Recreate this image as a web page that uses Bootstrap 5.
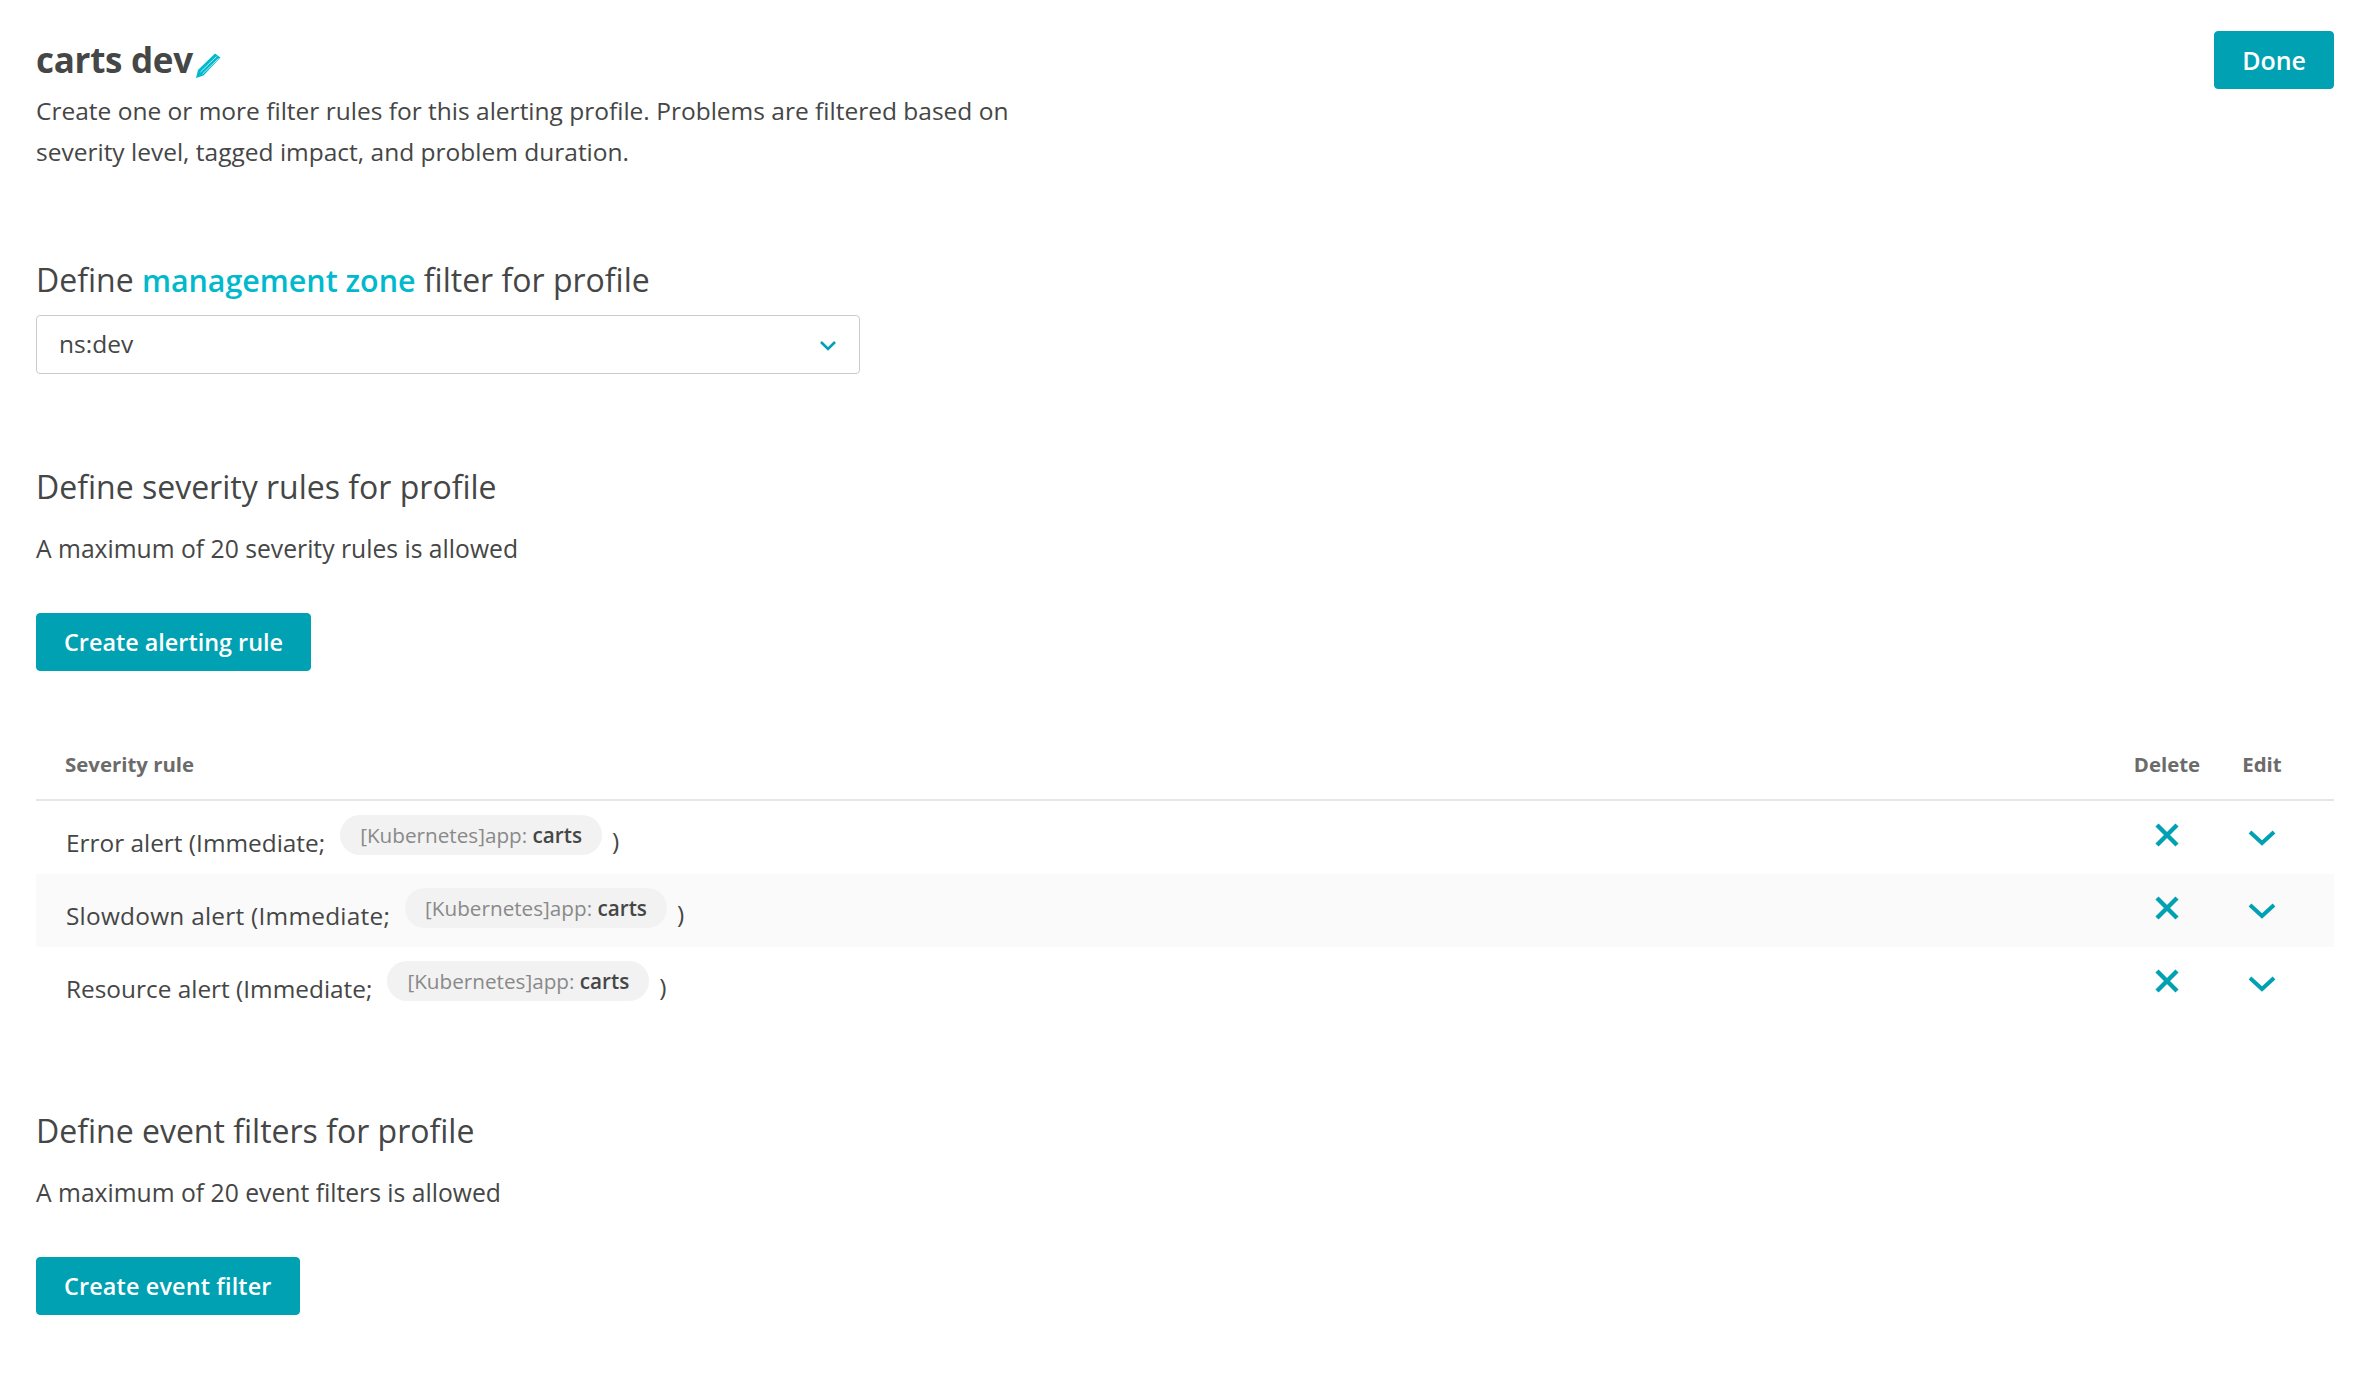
<!DOCTYPE html>
<html lang="en">
  <head>
    <meta charset="UTF-8" />
    <title>carts dev</title>
    <link href="https://cdn.jsdelivr.net/npm/bootstrap@5.3.2/dist/css/bootstrap.min.css" rel="stylesheet" />
    <style>
      body {
        font-family: "Open Sans", "Noto Sans", sans-serif;
        color: #454646;
        background: #fff;
        font-size: 24.5px;
      }
      .page-wrap { padding: 31px 30px 0 36px; }
      .profile-title { font-size: 35px; font-weight: 700; line-height: 58px; margin: 0; letter-spacing: -0.3px; }
      .profile-intro { width: 1040px; line-height: 41px; margin: 0; padding-top: 1px; }
      .section-head { font-size: 32px; font-weight: 400; line-height: 40px; margin: 0; }
      .teal-link { color: #00b9cc; font-size: 30.4px; font-weight: 600; text-decoration: none; }
      .head-zone { margin-top: 88px; }
      .zone-select {
        width: 824px; height: 59px; margin-top: 14px; padding: 0 22px 0 22px;
        border: 1.5px solid #ccc; border-radius: 4px;
      }
      .zone-select svg { margin-top: 2px; }
      .head-sev { margin-top: 93px; }
      .head-event { margin-top: 91px; }
      .limit-note { font-size: 24.7px; line-height: 40px; margin: 22px 0 44px; }
      .btn-teal {
        --bs-btn-bg: #00a1b2; --bs-btn-border-color: #00a1b2; --bs-btn-color: #fff;
        --bs-btn-hover-bg: #008c9e; --bs-btn-hover-border-color: #008c9e; --bs-btn-hover-color: #fff;
        height: 58px; padding: 0 27px; font-size: 23.4px; font-weight: 600; border-radius: 4px;
        line-height: 56px;
      }
      .btn-teal.is-done { font-size: 25px; line-height: 56px; }
      .btn-teal.is-event { letter-spacing: .15px; }
      .rule-list { margin-top: 62px; }
      .rule-head {
        height: 68px; border-bottom: 2px solid #e6e6e6; padding: 0 24px 4px 29px;
        font-size: 20.4px; font-weight: 700; color: #6b6b6b;
      }
      .rule-row { height: 73px; padding: 0 24px 0 30px; font-size: 24.4px; }
      .rule-row.is-odd { background: #fafafa; }
      .rule-name { padding-top: 11px; }
      .rule-name.is-wide { letter-spacing: .25px; }
      .tag-pill {
        height: 40px; line-height: 40px; border-radius: 20px; background: #f2f2f2;
        padding: 0 20px; margin: 0 10px 0 15px; font-size: 20.7px; color: #898989;
        position: relative; top: -2px;
      }
      .tag-pill b { font-weight: 600; color: #454646; }
      .rule-close { padding-top: 8px; }
      .col-del { width: 94px; text-align: center; }
      .col-edit { width: 96px; text-align: center; }
      .col-del svg, .col-edit svg { display: block; margin: 0 auto; }
      .col-del svg { margin-top: -5px; }
      .col-edit svg { margin-top: 0; }
      .pencil-mark { margin: 10px 0 0 2px; }
    </style>
  </head>
  <body>
    <div class="page-wrap">
      <div class="d-flex justify-content-between align-items-start">
        <div>
          <div class="d-flex align-items-center">
            <h1 class="profile-title">carts dev</h1>
            <svg class="pencil-mark" width="27" height="27" viewBox="0 0 27 27">
              <path d="M1 26l2-8L20 1.500l5.500 4L8.500 23.500z" fill="#00b9cc" />
              <path d="M5.500 20L21.500 4.500M7.500 22L23.500 6.500" stroke="#b5ecf1" stroke-width="1" />
            </svg>
          </div>
          <p class="profile-intro">Create one or more filter rules for this alerting profile. Problems are filtered based on severity level, tagged impact, and problem duration.</p>
        </div>
        <button class="btn btn-teal is-done" type="button">Done</button>
      </div>

      <h2 class="section-head head-zone">Define <a class="teal-link" href="#">management zone</a> filter for profile</h2>
      <div class="zone-select d-flex align-items-center justify-content-between">
        <span>ns:dev</span>
        <svg width="18" height="11" viewBox="0 0 18 11"><path d="M2 2l7 7 7-7" fill="none" stroke="#00a1b2" stroke-width="2.6" /></svg>
      </div>

      <h2 class="section-head head-sev">Define severity rules for profile</h2>
      <p class="limit-note">A maximum of 20 severity rules is allowed</p>
      <button class="btn btn-teal" type="button">Create alerting rule</button>

      <div class="rule-list">
        <div class="rule-head d-flex align-items-center">
          <span class="flex-grow-1">Severity rule</span>
          <span class="col-del">Delete</span>
          <span class="col-edit">Edit</span>
        </div>
        <div class="rule-row d-flex align-items-center">
          <div class="flex-grow-1 d-flex align-items-center">
            <span class="rule-name">Error alert (Immediate;</span>
            <span class="tag-pill">[Kubernetes]app: <b>carts</b></span>
            <span class="rule-close">)</span>
          </div>
          <div class="col-del"><svg width="24" height="24" viewBox="0 0 24 24"><path d="M2 2l20 20M22 2L2 22" stroke="#00a1b2" stroke-width="4.4" /></svg></div>
          <div class="col-edit"><svg width="28" height="18" viewBox="0 0 28 18"><path d="M2 3l12 11L26 3" fill="none" stroke="#00a1b2" stroke-width="4" /></svg></div>
        </div>
        <div class="rule-row is-odd d-flex align-items-center">
          <div class="flex-grow-1 d-flex align-items-center">
            <span class="rule-name is-wide">Slowdown alert (Immediate;</span>
            <span class="tag-pill">[Kubernetes]app: <b>carts</b></span>
            <span class="rule-close">)</span>
          </div>
          <div class="col-del"><svg width="24" height="24" viewBox="0 0 24 24"><path d="M2 2l20 20M22 2L2 22" stroke="#00a1b2" stroke-width="4.4" /></svg></div>
          <div class="col-edit"><svg width="28" height="18" viewBox="0 0 28 18"><path d="M2 3l12 11L26 3" fill="none" stroke="#00a1b2" stroke-width="4" /></svg></div>
        </div>
        <div class="rule-row d-flex align-items-center">
          <div class="flex-grow-1 d-flex align-items-center">
            <span class="rule-name">Resource alert (Immediate;</span>
            <span class="tag-pill">[Kubernetes]app: <b>carts</b></span>
            <span class="rule-close">)</span>
          </div>
          <div class="col-del"><svg width="24" height="24" viewBox="0 0 24 24"><path d="M2 2l20 20M22 2L2 22" stroke="#00a1b2" stroke-width="4.4" /></svg></div>
          <div class="col-edit"><svg width="28" height="18" viewBox="0 0 28 18"><path d="M2 3l12 11L26 3" fill="none" stroke="#00a1b2" stroke-width="4" /></svg></div>
        </div>
      </div>

      <h2 class="section-head head-event">Define event filters for profile</h2>
      <p class="limit-note">A maximum of 20 event filters is allowed</p>
      <button class="btn btn-teal is-event" type="button">Create event filter</button>
    </div>
    <script src="https://cdn.jsdelivr.net/npm/bootstrap@5.3.2/dist/js/bootstrap.bundle.min.js"></script>
  </body>
</html>
